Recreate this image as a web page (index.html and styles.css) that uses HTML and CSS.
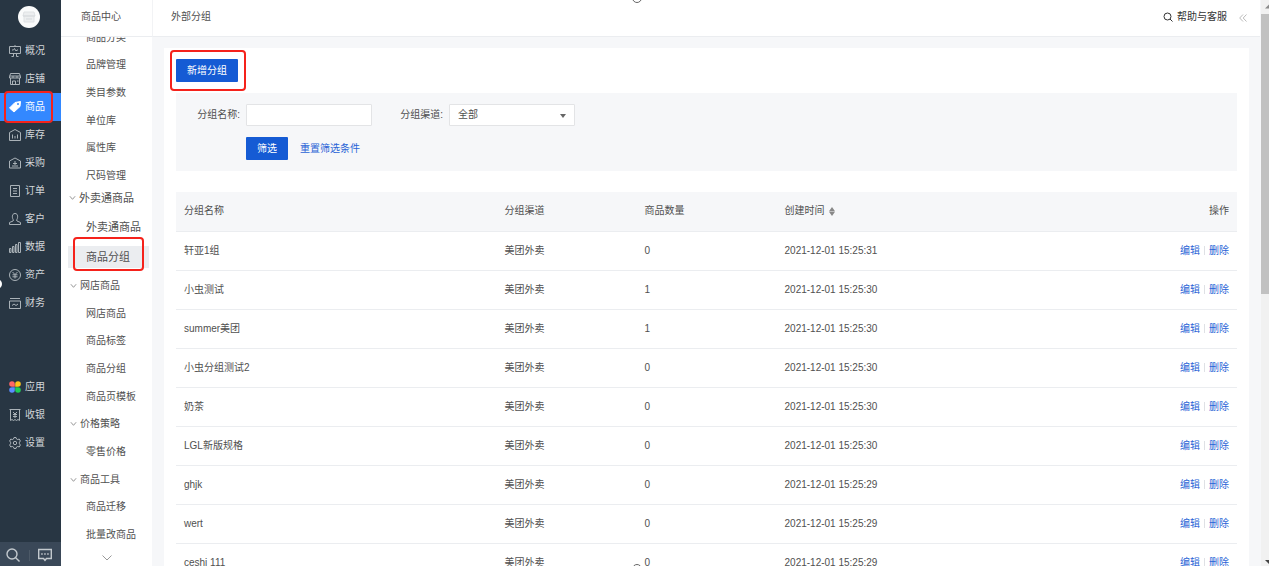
FILE: index.html
```html
<!DOCTYPE html>
<html lang="zh-CN">
<head>
<meta charset="utf-8">
<title>外部分组</title>
<link rel="stylesheet" href="styles.css">
</head>
<body>
<div class="app">
  <nav class="rail">
    <a class="avatar" href="#" aria-label="店铺"><svg viewBox="0 0 22 22"><path d="M6 6h10l1 4H5zM6 10v6h10v-6" fill="#eceeef" stroke="#dfe2e4"/><path d="M5 10h12M8 13h6" stroke="#d5d9dc"/></svg></a>
    <div class="rail-group">
      <a class="rail-item" href="#"><svg viewBox="0 0 12 12"><path d="M.5 1.500h11v7H.5zM6 0v1.500M2.500 11.500h2v-3M9.500 11.500h-2v-3M3 5h1.500l1-1.500 1.500 2.500 1-1h1"/></svg>概况</a>
      <a class="rail-item" href="#"><svg viewBox="0 0 12 12"><path d="M1.500.5h9l1 3.500v1H.5V4zM1.500 5v6.500h9V5M.5 3h11M4 3v2M8 3v2M3.500 11V8h3v3M8 8h1.500"/></svg>店铺</a>
      <a class="rail-item active" href="#"><svg viewBox="0 0 12 12"><path class="solid" d="M6 1.500 11.500.5 11 5.500 5 11 .5 7z"/><circle cx="9" cy="3" r="1" fill="#3388ff" stroke="none"/></svg>商品<span class="mark"></span></a>
      <a class="rail-item" href="#"><svg viewBox="0 0 12 12"><path d="M.5 11.500v-8L6 .5l5.500 3v8zM3.500 9.500v-4M6 9.500V7M8.500 9.500v-4M3 11.500h6"/></svg>库存</a>
      <a class="rail-item" href="#"><svg viewBox="0 0 12 12"><path d="M.5 11V4L6 1l5.500 3v7zM6 4v4M4 6.500h4M3 9h6"/></svg>采购</a>
      <a class="rail-item" href="#"><svg viewBox="0 0 12 12"><path d="M1.500.5h9v11h-9zM4 3.500h4M4 6h4M4 8.500h4"/></svg>订单</a>
      <a class="rail-item" href="#"><svg viewBox="0 0 12 12"><path d="M4.500 7C3 5.500 2.500.5 6 .5S9 5.500 7.500 7L8 8l3.500 1.500v2H.5v-2L4 8z"/></svg>客户</a>
      <a class="rail-item" href="#"><svg viewBox="0 0 12 12"><path d="M.5 7.500h1.500v4H.5zM3.500 5.500h1.500v6H3.500zM6.500 3.500H8v8H6.500zM9.500 1.500h2v10h-2z"/></svg>数据</a>
      <a class="rail-item" href="#"><svg viewBox="0 0 12 12"><circle cx="6" cy="6" r="5.500"/><path d="M3.500 3 6 5.500 8.500 3M6 5.500V9.500M3.500 5.800h5M3.500 7.800h5"/></svg>资产</a>
      <a class="rail-item" href="#"><svg viewBox="0 0 12 12"><path d="M1 1.500h10M.5 4h11v7.500H.5zM3 8.500l2-1.500 2 1.500 2-1.500"/></svg>财务</a>
    </div>
    <div class="rail-group rail-lower">
      <a class="rail-item" href="#"><svg viewBox="0 0 12 12"><g stroke="none"><path fill="#ff6666" d="M3 .2a2.800 2.800 0 0 1 2.800 2.800v2.800H3A2.800 2.800 0 0 1 3 .2z"/><path fill="#ffc21a" d="M9 .2a2.800 2.800 0 0 1 0 5.600H6.200V3A2.800 2.800 0 0 1 9 .2z"/><path fill="#5b8cff" d="M3 6.200h2.800V9A2.800 2.800 0 1 1 3 6.200z"/><path fill="#1fcb55" d="M6.200 6.200H9A2.800 2.800 0 1 1 6.200 9z"/></g></svg>应用</a>
      <a class="rail-item" href="#"><svg viewBox="0 0 12 12"><path d="M1.500 11.500V.5h9v11l-1.500-1-1.500 1-1.500-1-1.500 1-1.500-1zM4 3l2 2 2-2M6 5v4M4 5.500h4M4 7.500h4M.5.5h11"/></svg>收银</a>
      <a class="rail-item" href="#"><svg viewBox="0 0 12 12"><path d="M5 .5h2l.5 1.500 1.200.6L10.200 2l1.200 2-1 1.200v1.600l1 1.200-1.200 2-1.500-.6-1.200.6L7 11.500H5L4.500 10l-1.200-.6-1.500.6L.6 8l1-1.200V5.200L.6 4l1.200-2 1.500.6L4.500 2z"/><circle cx="6" cy="6" r="1.700"/></svg>设置</a>
    </div>
    <div class="rail-foot">
      <button aria-label="搜索"><svg viewBox="0 0 14 14"><circle cx="6" cy="6" r="5"/><path d="m9.700 9.700 3.800 3.800"/></svg></button>
      <span class="foot-line"></span>
      <button aria-label="消息"><svg viewBox="0 0 14 14"><path d="M.7 1.500h12.600v9H8.500L7 12.300 5.500 10.500H.7z"/><path d="M3.200 6h1.500M6.200 6h1.500M9.200 6h1.500" stroke-width="1.500"/></svg></button>
    </div>
    <span class="rail-handle"></span>
  </nav>

  <aside class="side">
    <h2 class="side-head">商品中心</h2>
    <div class="side-window">
      <div class="side-list side-first">
        <a href="#">商品分类</a><a href="#">品牌管理</a><a href="#">类目参数</a><a href="#">单位库</a><a href="#">属性库</a><a href="#">尺码管理</a>
      </div>
    </div>
    <div class="side-takeout">
      <button class="side-title"><svg class="chev" viewBox="0 0 8 6"><path d="m1 1 3 3.500L7 1"/></svg>外卖通商品</button>
      <a href="#">外卖通商品</a>
      <a class="current" href="#"><span>商品分组</span><i class="mark"></i></a>
    </div>
    <div class="side-list side-last">
      <button class="side-title"><svg class="chev" viewBox="0 0 8 6"><path d="m1 1 3 3.500L7 1"/></svg>网店商品</button>
      <a href="#">网店商品</a><a href="#">商品标签</a><a href="#">商品分组</a><a href="#">商品页模板</a>
      <button class="side-title"><svg class="chev" viewBox="0 0 8 6"><path d="m1 1 3 3.500L7 1"/></svg>价格策略</button>
      <a href="#">零售价格</a>
      <button class="side-title"><svg class="chev" viewBox="0 0 8 6"><path d="m1 1 3 3.500L7 1"/></svg>商品工具</button>
      <a href="#">商品迁移</a><a href="#">批量改商品</a>
    </div>
    <button class="side-more" aria-label="更多"><svg viewBox="0 0 10 6"><path d="m.5.5 4.500 4.500L9.500.5"/></svg></button>
  </aside>

  <main class="main">
    <header class="top">
      <h1>外部分组</h1>
      <a class="help" href="#"><svg viewBox="0 0 10 10"><circle cx="4.500" cy="4.500" r="3.500"/><path d="m7 7 2.500 2.500"/></svg>帮助与客服</a>
      <button class="fold" aria-label="收起"><svg viewBox="0 0 8 8"><path d="M4 .5.700 4 4 7.500M7.500.5 4.200 4l3.300 3.500"/></svg></button>
    </header>
    <section class="card">
      <div class="create"><button class="btn">新增分组</button><span class="mark"></span></div>
      <form class="filter">
        <label for="name">分组名称:</label>
        <input id="name" type="text">
        <label for="channel">分组渠道:</label>
        <span class="select"><select id="channel"><option>全部</option></select><svg viewBox="0 0 6 4"><path d="M0 0h6L3 4z"/></svg></span>
        <div class="filter-actions"><button class="btn" type="button">筛选</button><a href="#">重置筛选条件</a></div>
      </form>
      <table class="groups">
        <thead><tr><th class="c-name">分组名称</th><th class="c-mid">分组渠道</th><th class="c-mid">商品数量</th><th>创建时间<svg class="sort" viewBox="0 0 6 9"><path d="M3 0l3 4.200H0zM0 4.800h6L3 9z"/></svg></th><th class="ops">操作</th></tr></thead>
        <tbody>
          <tr><td>轩亚1组</td><td>美团外卖</td><td>0</td><td>2021-12-01 15:25:31</td><td class="ops"><a href="#">编辑</a><i></i><a href="#">删除</a></td></tr>
          <tr><td>小虫测试</td><td>美团外卖</td><td>1</td><td>2021-12-01 15:25:30</td><td class="ops"><a href="#">编辑</a><i></i><a href="#">删除</a></td></tr>
          <tr><td>summer美团</td><td>美团外卖</td><td>1</td><td>2021-12-01 15:25:30</td><td class="ops"><a href="#">编辑</a><i></i><a href="#">删除</a></td></tr>
          <tr><td>小虫分组测试2</td><td>美团外卖</td><td>0</td><td>2021-12-01 15:25:30</td><td class="ops"><a href="#">编辑</a><i></i><a href="#">删除</a></td></tr>
          <tr><td>奶茶</td><td>美团外卖</td><td>0</td><td>2021-12-01 15:25:30</td><td class="ops"><a href="#">编辑</a><i></i><a href="#">删除</a></td></tr>
          <tr><td>LGL新版规格</td><td>美团外卖</td><td>0</td><td>2021-12-01 15:25:30</td><td class="ops"><a href="#">编辑</a><i></i><a href="#">删除</a></td></tr>
          <tr><td>ghjk</td><td>美团外卖</td><td>0</td><td>2021-12-01 15:25:29</td><td class="ops"><a href="#">编辑</a><i></i><a href="#">删除</a></td></tr>
          <tr><td>wert</td><td>美团外卖</td><td>0</td><td>2021-12-01 15:25:29</td><td class="ops"><a href="#">编辑</a><i></i><a href="#">删除</a></td></tr>
          <tr><td>ceshi 111</td><td>美团外卖</td><td>0</td><td>2021-12-01 15:25:29</td><td class="ops"><a href="#">编辑</a><i></i><a href="#">删除</a></td></tr>
        </tbody>
      </table>
    </section>
  </main>

  <div class="scroll">
    <svg viewBox="0 0 9 14"><path d="M4 8.500h9L8.500 4z" fill="#8a8a8a"/></svg>
    <div class="thumb"></div>
    <svg class="down" viewBox="0 0 9 8"><path d="M4 2h9L8.500 6.500z" fill="#444"/></svg>
  </div>
  <span class="grip grip-top"></span>
  <span class="grip grip-bottom"></span>
</div>
</body>
</html>
```
FILE: styles.css
```css
* { box-sizing: border-box; }
body {
  margin: 0;
  font: 10px/16px "Liberation Sans", "Noto Sans CJK SC", sans-serif;
  color: #505050;
}
a { color: inherit; text-decoration: none; }
button {
  margin: 0;
  padding: 0;
  border: 0;
  background: none;
  font: inherit;
  color: inherit;
}
svg { display: block; fill: none; flex: none; }
h1, h2 { margin: 0; font-size: 10px; font-weight: 400; }

.app {
  position: relative;
  display: flex;
  height: 100vh;
  overflow: hidden;
}
.mark {
  position: absolute;
  border: 2px solid #f5221b;
  border-radius: 4px;
  pointer-events: none;
}

/* Dark navigation rail */
.rail {
  position: relative;
  display: flex;
  flex-direction: column;
  flex: none;
  width: 61px;
  background: #283643;
  color: #d3d7da;
}
.avatar {
  width: 22px;
  height: 22px;
  margin: 6px 0 9px 18px;
  border-radius: 50%;
  background: #fafbfb;
}
.rail-item {
  position: relative;
  display: flex;
  align-items: center;
  gap: 4px;
  height: 28px;
  padding-left: 9px;
}
.rail-item svg { width: 12px; height: 12px; stroke: #aab2b8; stroke-width: 1; }
.rail-item.active { background: #3388ff; color: #fff; }
.rail-item .solid { fill: #fff; stroke: #fff; stroke-linejoin: round; }
.rail-item .mark { inset: -2px 8px -2px 4px; }
.rail-lower { margin-top: 56px; }
.rail-foot {
  display: flex;
  align-items: center;
  justify-content: space-between;
  height: 24px;
  margin-top: auto;
  padding: 2px 9px 0 6px;
  background: #3a4858;
}
.rail-foot svg { width: 14px; height: 14px; stroke: #c3c9ce; stroke-width: 1.4; }
.foot-line { width: 1px; height: 11px; background: #4c5967; }
.rail-handle {
  position: absolute;
  left: -8px;
  top: 279px;
  width: 10px;
  height: 10px;
  border-radius: 50%;
  background: #fff;
}

/* Second level menu */
.side {
  display: flex;
  flex-direction: column;
  flex: none;
  width: 91px;
}
.side-head {
  flex: none;
  height: 37px;
  padding: 9px 0 0 20px;
  border-bottom: 1px solid #ebedf0;
}
.side-window {
  display: flex;
  flex-direction: column;
  justify-content: flex-end;
  flex: none;
  height: 153px;
  overflow: hidden;
}
.side-list { display: grid; grid-auto-rows: 1fr; flex: none; }
.side-first { height: 166px; }
.side-last { height: 277px; }
.side a { display: flex; align-items: center; padding-left: 25px; }
.side-title {
  display: flex;
  align-items: center;
  gap: 3px;
  padding-left: 9px;
}
.chev { width: 7px; height: 6px; stroke: #888; }
.side-takeout { flex: none; font-size: 11px; }
.side-takeout .side-title { height: 16px; margin-bottom: 6px; padding-left: 8px; font-size: 11px; }
.side-takeout a { position: relative; height: 30px; }
.side-takeout .current { padding: 0 3px 0 7px; }
.current span { flex: 1; padding: 3px 0 3px 18px; background: #ebedf0; }
.current .mark { inset: -5px 8px 1px 12px; }
.side-more { display: flex; justify-content: center; align-items: center; height: 17px; }
.side-more svg { width: 10px; height: 6px; stroke: #999; }

/* Content */
.main {
  display: flex;
  flex-direction: column;
  flex: 1;
  min-width: 0;
  background: #f6f7f9;
}
.top {
  display: flex;
  align-items: center;
  flex: none;
  height: 37px;
  padding: 0 13px 2px 18px;
  border-bottom: 1px solid #ebedf0;
  border-left: 1px solid #f2f3f5;
  background: #fff;
}
.top h1 { flex: 1; }
.help { display: flex; align-items: center; gap: 4px; color: #333; }
.help svg { width: 10px; height: 10px; stroke: #333; }
.fold { margin-left: 12px; padding-top: 2px; }
.fold svg { width: 8px; height: 8px; stroke: #bbb; stroke-width: 1; }
.card {
  flex: 1;
  margin: 11px 11px 0 12px;
  padding: 11px 12px 0;
  background: #fff;
}
.btn {
  height: 23px;
  padding: 0 11px;
  border-radius: 1px;
  background: #155bd4;
  color: #fff;
}
.create { position: relative; display: flex; width: max-content; }
.create .mark { inset: -9px -8px -9px -6px; }
.filter {
  display: grid;
  grid-template-columns: 64px 126px 65px 126px;
  column-gap: 6px;
  row-gap: 11px;
  align-items: center;
  margin: 11px 0 21px;
  padding: 11px 0;
  background: #f6f7f9;
}
.filter label { text-align: right; white-space: nowrap; }
.filter input, .filter select {
  width: 100%;
  height: 22px;
  padding: 0 8px;
  border: 1px solid #e3e4e6;
  border-radius: 1px;
  background: #fff;
  font: inherit;
  color: inherit;
  appearance: none;
}
.select { position: relative; display: flex; }
.select svg {
  position: absolute;
  right: 9px;
  top: 10px;
  width: 6px;
  height: 4px;
  fill: #666;
}
.filter-actions { grid-column: 2 / -1; display: flex; align-items: center; gap: 12px; }
.filter-actions a, .ops a { color: #2a64d6; }

.groups { width: 100%; border-collapse: collapse; table-layout: fixed; }
.groups th, .groups td {
  height: 39px;
  padding: 0 8px;
  border-bottom: 1px solid #ebedf0;
  text-align: left;
  font-weight: 400;
}
.groups .c-name { width: 30.2%; }
.groups .c-mid { width: 13.2%; }
.groups th { background: #f6f7f9; }
.sort { display: inline-block; width: 6px; height: 9px; margin-left: 4px; fill: #888; vertical-align: -2px; }
.groups .ops { text-align: right; }
.ops i {
  display: inline-block;
  width: 1px;
  height: 9px;
  margin: 0 4px;
  background: #dfe1e5;
  vertical-align: -1px;
}

/* Window scrollbar */
.scroll { display: flex; flex-direction: column; flex: none; width: 9px; background: #f1f1f1; border-left: 1px solid #f6f7f9; }
.scroll svg { width: 9px; height: 14px; }
.thumb { height: 280px; background: #c1c1c1; }
.scroll .down { height: 8px; margin-top: auto; }
.grip {
  position: absolute;
  left: 50%;
  width: 10px;
  height: 10px;
  margin-left: -3px;
  border: 1px solid #666;
  border-radius: 50%;
  background: #fff;
}
.grip-top { top: -7px; }
.grip-bottom { bottom: -8px; }
```
